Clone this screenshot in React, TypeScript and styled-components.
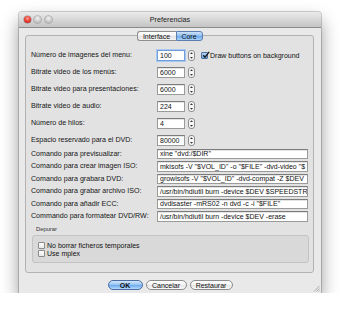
import React from 'react'
import styled, { createGlobalStyle } from 'styled-components'

const GlobalStyle = createGlobalStyle`
  html, body {
    margin: 0;
    padding: 0;
    background: #ffffff;
  }
  body {
    font-family: "Liberation Sans", Arial, sans-serif;
    color: #111;
  }
`

const Page = styled.div`
  padding: 12px 19px 0 19px;
`

const Window = styled.div`
  position: relative;
  width: 302px;
  height: 281px;
  background: #e9e9e9;
  display: flex;
  flex-direction: column;
  box-shadow: 0 0 0 1px rgba(0, 0, 0, 0.18), 0 9px 18px rgba(0, 0, 0, 0.42);
  border-radius: 3px 3px 0 0;
`

const TitleBar = styled.div`
  height: 15px;
  display: grid;
  grid-template-columns: 1fr auto 1fr;
  align-items: center;
  background: linear-gradient(#ebebeb, #c4c4c4);
  border-bottom: 1px solid #8c8c8c;
  border-radius: 3px 3px 0 0;
`

const Lights = styled.div`
  display: flex;
  gap: 3.5px;
  padding-left: 4.5px;
`

const Light = styled.span<{ $red?: boolean }>`
  width: 7px;
  height: 7px;
  border-radius: 50%;
  background: ${p => p.$red
    ? 'radial-gradient(circle at 50% 35%, #ff9c8f 0, #e4352b 55%, #a3160e 100%)'
    : 'radial-gradient(circle at 50% 35%, #f2f2f2 0, #c7c7c7 60%, #a0a0a0 100%)'};
  box-shadow: 0 0 0 0.5px rgba(0, 0, 0, 0.35);
`

const Title = styled.div`
  font-size: 7.2px;
  color: #222;
`

const Body = styled.div`
  flex: 1;
  display: flex;
  flex-direction: column;
  padding: 0 7px 0 6px;
`

const TabStrip = styled.div`
  position: relative;
  z-index: 1;
  display: flex;
  justify-content: center;
  margin-top: 3px;
`

const Tab = styled.div<{ $active?: boolean; $w: number }>`
  width: ${p => p.$w}px;
  height: 10px;
  display: flex;
  align-items: center;
  justify-content: center;
  font-size: 7px;
  color: #111;
  box-sizing: border-box;
  border: 1px solid ${p => (p.$active ? '#5b7fae' : '#8f8f8f')};
  background: ${p => p.$active
    ? 'linear-gradient(#cfe3fa, #8dbdf0 50%, #6aa6e8 51%, #a9d2fb)'
    : 'linear-gradient(#ffffff, #f1f1f1 50%, #e2e2e2 51%, #f5f5f5)'};
  &:first-child {
    border-radius: 3px 0 0 3px;
    border-right: none;
  }
  &:last-child {
    border-radius: 0 3px 3px 0;
  }
`

const TabBox = styled.div`
  margin-top: -6px;
  height: 238px;
  box-sizing: border-box;
  border: 1px solid #b2b2b2;
  border-radius: 3px;
  background: #e2e2e2;
  padding: 13.5px 5px 0 5px;
  display: flex;
  flex-direction: column;
`

const Row = styled.div<{ $h: number; $gap: number }>`
  height: ${p => p.$h}px;
  margin-top: ${p => p.$gap}px;
  display: flex;
  align-items: center;
`

const Label = styled.div`
  width: 126px;
  font-size: 7.1px;
  color: #161616;
  white-space: nowrap;
`

const Field = styled.div<{ $w: number; $focus?: boolean }>`
  width: ${p => p.$w}px;
  height: 100%;
  box-sizing: border-box;
  background: #fff;
  border: 1px solid ${p => (p.$focus ? '#6f9fdc' : '#9a9a9a')};
  border-top-color: ${p => (p.$focus ? '#6f9fdc' : '#7c7c7c')};
  box-shadow: ${p => (p.$focus ? '0 0 0 1px #a9c7ef' : 'inset 0 1px 0 #e4e4e4')};
  font-size: 7px;
  padding-left: 2px;
  display: flex;
  align-items: center;
  overflow: hidden;
  white-space: nowrap;
  color: #111;
`

const Stepper = styled.div`
  margin-left: 3px;
  width: 7px;
  height: 11px;
  display: flex;
`

const CheckText = styled.span`
  font-size: 7px;
  color: #111;
  white-space: nowrap;
`

const CheckLine = styled.div<{ $ml?: number }>`
  display: flex;
  align-items: center;
  gap: 2px;
  margin-left: ${p => p.$ml ?? 0}px;
`

const Box = styled.span<{ $checked?: boolean }>`
  width: 7px;
  height: 7px;
  box-sizing: border-box;
  border: 1px solid ${p => (p.$checked ? '#4d6f9f' : '#8a8a8a')};
  border-radius: 1px;
  background: ${p => p.$checked
    ? 'linear-gradient(#bcd8f7, #6ea6e6)'
    : 'linear-gradient(#ffffff, #e9e9e9)'};
  position: relative;
  display: flex;
  align-items: center;
  justify-content: center;
  overflow: visible;
`

const GroupTitle = styled.div`
  margin-top: 3px;
  margin-left: 5px;
  font-size: 5.8px;
  color: #333;
  height: 9px;
  display: flex;
  align-items: center;
`

const Group = styled.div`
  margin: 1px 0 0 1px;
  width: 277px;
  height: 28px;
  box-sizing: border-box;
  border: 1px solid #c3c3c3;
  border-radius: 3px;
  background: #d9d9d9;
  padding: 6px 0 0 5px;
  display: flex;
  flex-direction: column;
  gap: 1px;
`

const Buttons = styled.div`
  display: flex;
  justify-content: center;
  gap: 3px;
  margin-top: 7px;
  margin-left: 1px;
`

const Button = styled.div<{ $primary?: boolean; $w: number }>`
  width: ${p => p.$w}px;
  height: 10px;
  box-sizing: border-box;
  border-radius: 6px;
  border: 1px solid ${p => (p.$primary ? '#4a6ea3' : '#8c8c8c')};
  background: ${p => p.$primary
    ? 'linear-gradient(#d3e7fc, #93c3f3 50%, #6aa8ea 51%, #b3daff)'
    : 'linear-gradient(#ffffff, #f3f3f3 50%, #e4e4e4 51%, #fafafa)'};
  display: flex;
  align-items: center;
  justify-content: center;
  font-size: 7px;
  font-weight: ${p => (p.$primary ? 700 : 400)};
  color: #111;
`

const Grip = styled.svg`
  position: absolute;
  right: 1px;
  bottom: 1px;
`

const StepperIcon = () => (
  <Stepper>
    <svg width="7" height="11" viewBox="0 0 7 11">
      <rect x="0.5" y="0.5" width="6" height="10" rx="2.5" fill="#f6f6f6" stroke="#8d8d8d" />
      <path d="M3.5 2.2 L5 4 L2 4 Z" fill="#333" />
      <path d="M3.5 8.8 L5 7 L2 7 Z" fill="#333" />
    </svg>
  </Stepper>
)

const Check = ({ checked }: { checked?: boolean }) => (
  <Box $checked={checked}>
    {checked && (
      <svg width="8" height="8" viewBox="0 0 8 8" style={{ position: 'absolute', left: 0, top: -2 }}>
        <path d="M1.2 4.2 L3 6.2 L7.2 0.8" fill="none" stroke="#1a1a1a" strokeWidth="1.3" />
      </svg>
    )}
  </Box>
)

const spinRows = [
  { label: 'Número de imagenes del menu:', value: '100', focus: true },
  { label: 'Bitrate video de los menús:', value: '6000' },
  { label: 'Bitrate video para presentaciones:', value: '6000' },
  { label: 'Bitrate video de audio:', value: '224' },
  { label: 'Número de hilos:', value: '4' },
  { label: 'Espacio reservado para el DVD:', value: '80000' },
]

const commandRows = [
  { label: 'Comando para previsualizar:', value: 'xine "dvd:/$DIR"' },
  { label: 'Comando para crear imagen ISO:', value: 'mkisofs -V "$VOL_ID" -o "$FILE" -dvd-video "$' },
  { label: 'Comando para grabara DVD:', value: 'growisofs -V "$VOL_ID" -dvd-compat -Z $DEV' },
  { label: 'Comando para grabar archivo ISO:', value: '/usr/bin/hdiutil burn -device $DEV $SPEEDSTR' },
  { label: 'Comando para añadir ECC:', value: 'dvdisaster -mRS02 -n dvd -c -i "$FILE"' },
  { label: 'Commando para formatear DVD/RW:', value: '/usr/bin/hdiutil burn -device $DEV -erase' },
]

const App = () => {
  return (
    <>
      <GlobalStyle />
      <Page>
        <Window>
          <TitleBar>
            <Lights>
              <Light $red />
              <Light />
              <Light />
            </Lights>
            <Title>Preferencias</Title>
            <div />
          </TitleBar>

          <Body>
            <TabStrip>
              <Tab $w={39}>Interface</Tab>
              <Tab $w={27} $active>Core</Tab>
            </TabStrip>

            <TabBox>
              {spinRows.map((r, i) => (
                <Row key={r.label} $h={11} $gap={i === 0 ? 0 : 6}>
                  <Label>{r.label}</Label>
                  <Field $w={28} $focus={r.focus}>{r.value}</Field>
                  <StepperIcon />
                  {i === 0 && (
                    <CheckLine $ml={6}>
                      <Check checked />
                      <CheckText>Draw buttons on background</CheckText>
                    </CheckLine>
                  )}
                </Row>
              ))}

              {commandRows.map((r, i) => (
                <Row key={r.label} $h={10.5} $gap={i === 0 ? 3 : 2}>
                  <Label>{r.label}</Label>
                  <Field $w={151}>{r.value}</Field>
                </Row>
              ))}

              <GroupTitle>Depurar</GroupTitle>
              <Group>
                <CheckLine>
                  <Check />
                  <CheckText>No borrar ficheros temporales</CheckText>
                </CheckLine>
                <CheckLine>
                  <Check />
                  <CheckText>Use mplex</CheckText>
                </CheckLine>
              </Group>
            </TabBox>

            <Buttons>
              <Button $w={35} $primary>OK</Button>
              <Button $w={41}>Cancelar</Button>
              <Button $w={43}>Restaurar</Button>
            </Buttons>
          </Body>

          <Grip width="7" height="7" viewBox="0 0 7 7">
            <path d="M1 6.5 L6.5 1 M3.5 6.5 L6.5 3.5 M5.5 6.5 L6.5 5.5" stroke="#9a9a9a" strokeWidth="0.8" />
          </Grip>
        </Window>
      </Page>
    </>
  )
}

export default App
